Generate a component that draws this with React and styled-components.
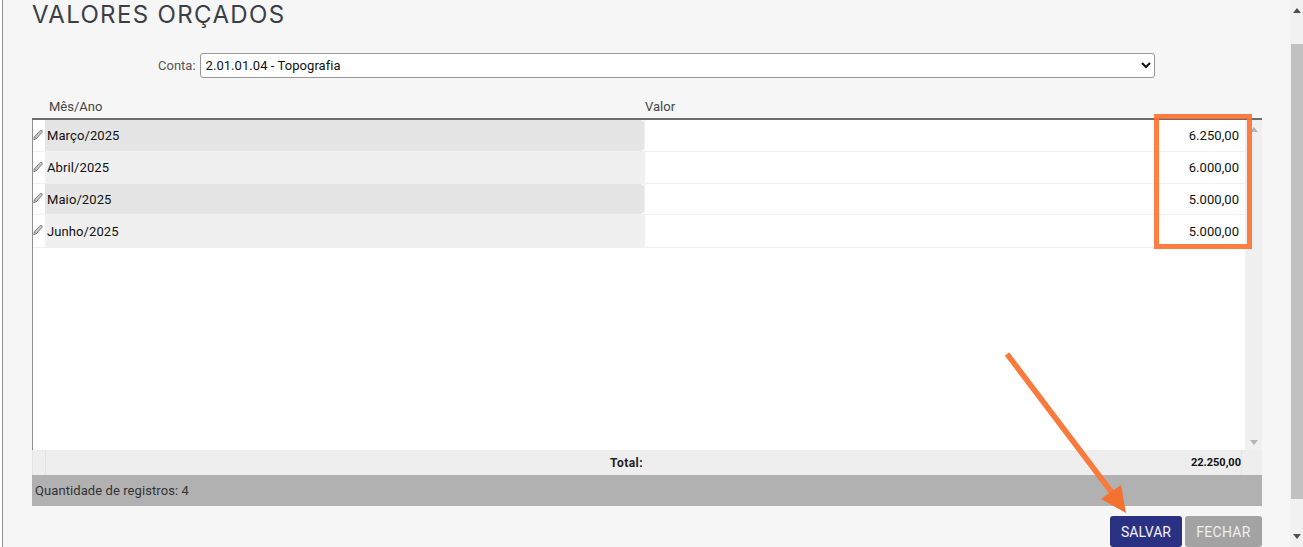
import React from "react";
import styled, { createGlobalStyle } from "styled-components";

const Global = createGlobalStyle`
  html, body { margin: 0; padding: 0; background: #fff; overflow: hidden; }
  body { font-family: Roboto, "Liberation Sans", sans-serif; }
  * { box-sizing: border-box; }
`;

const Page = styled.div`
  position: relative;
  width: 1303px;
  height: 547px;
  display: flex;
  overflow: hidden;
  padding-left: 2px;
  background: #fff;
`;
const Panel = styled.main`
  flex: 1;
  min-width: 0;
  background: #f6f6f6;
  border-left: 1px solid #8f8f8f;
  padding: 0 28px 0 29px;
  display: flex;
  flex-direction: column;
`;
const Title = styled.h1`
  margin: 0;
  height: 53px;
  font-family: Inter, "Open Sans", sans-serif;
  font-size: 24px;
  font-weight: 400;
  line-height: 29px;
  letter-spacing: 1.35px;
  color: #3a3f47;
`;
const Filter = styled.div`
  display: flex;
  align-items: center;
  height: 25px;
  padding-left: 126px;
  gap: 4px;
`;
const FilterLabel = styled.label`
  font-size: 13px;
  color: #555;
`;
const Select = styled.select`
  width: 955px;
  height: 25px;
  font-family: Roboto, sans-serif;
  font-size: 13px;
  letter-spacing: 0.06px;
  color: #111;
  background-color: #fff;
  border: 1px solid #999;
  border-radius: 3px;
  padding: 0 0 0 1px;
`;
const Head = styled.div`
  margin-top: 19px;
  height: 23px;
  display: grid;
  grid-template-columns: 17px 596px 1fr;
  align-items: center;
  border-bottom: 2px solid #6d6d6d;
  font-size: 13px;
  color: #444;
`;
const HeadCell = styled.div`
  grid-column: ${(p) => p.$col};
  padding-bottom: 3px;
`;
const Body = styled.div`
  height: 330px;
  display: flex;
  background: #fff;
  border-left: 1px solid #8f8f8f;
`;
const Rows = styled.div`
  flex: 1;
  min-width: 0;
`;
const Row = styled.div`
  display: grid;
  grid-template-columns: 12px 599px 1fr;
  height: ${(p) => p.$h}px;
  border-bottom: 1px solid #f0f0f0;
`;
const Gutter = styled.div`
  display: flex;
  align-items: center;
  justify-content: center;
  padding-bottom: 2px;
  padding-right: 2px;
`;
const NameCell = styled.div`
  display: flex;
  align-items: center;
  padding-left: 2px;
  font-size: 13px;
  letter-spacing: 0.1px;
  color: #111;
  background: ${(p) => (p.$odd ? "#e5e5e5" : "#f0f0f0")};
  border-radius: ${(p) => (p.$odd ? "0 4px 4px 0" : "0")};
`;
const ValueCell = styled.div`
  display: flex;
  align-items: center;
  justify-content: flex-end;
  padding-right: 6px;
  font-size: 13px;
  letter-spacing: 0.05px;
  color: #111;
  border-left: 1px solid #f0f0f0;
`;
const Track = styled.div`
  width: 17px;
  background: #f0f0f0;
  display: flex;
  flex-direction: column;
  justify-content: space-between;
  align-items: center;
  padding: 7px 0 5px;
`;
const Arrow = styled.span`
  width: 0;
  height: 0;
  border-left: 4px solid transparent;
  border-right: 4px solid transparent;
  ${(p) => (p.$down ? "border-top" : "border-bottom")}: 5px solid ${(p) => p.$color};
`;
const Totals = styled.div`
  height: 25px;
  display: grid;
  grid-template-columns: 13px 598px 597px 1fr;
  background: #eeeeee;
  border-left: 1px solid #e4e4e4;
  align-items: center;
`;
const TotalGutter = styled.div`
  height: 100%;
  border-right: 1px solid #e4e4e4;
`;
const TotalLabel = styled.div`
  text-align: right;
  font-size: 12px;
  font-weight: 700;
  letter-spacing: 0.45px;
  color: #222;
  padding-right: 1px;
`;
const TotalValue = styled.div`
  height: 100%;
  display: flex;
  align-items: center;
  justify-content: flex-end;
  font-size: 11px;
  font-weight: 700;
  color: #111;
`;
const TotalEnd = styled.div`
  height: 100%;
  border-left: 1px solid #e4e4e4;
`;
const Pager = styled.div`
  height: 31px;
  background: #b1b1b1;
  display: flex;
  align-items: center;
  padding-left: 3px;
  font-size: 13px;
  letter-spacing: 0.08px;
  color: #333;
`;
const Actions = styled.div`
  margin-top: 10px;
  display: flex;
  justify-content: flex-end;
  gap: 3px;
`;
const Button = styled.button`
  width: ${(p) => p.$w}px;
  height: 31px;
  border: 0;
  border-radius: 3px;
  font-family: Roboto, sans-serif;
  font-size: 14px;
  letter-spacing: ${(p) => p.$track}px;
  padding: 0;
  color: ${(p) => p.$fg};
  background: ${(p) => p.$bg};
`;
const Scrollbar = styled.div`
  width: 13px;
  background: #f1f1f1;
  display: flex;
  flex-direction: column;
  align-items: center;
  padding-top: 8px;
`;
const Thumb = styled.div`
  width: 12px;
  height: 455px;
  margin: 31px 0 35px 1px;
  background: #c1c1c1;
`;
const Highlight = styled.div`
  position: absolute;
  left: 1154px;
  top: 114px;
  width: 98px;
  height: 135px;
  border: 5px solid rgba(255, 112, 44, 0.9);
`;
const Annotation = styled.svg`
  position: absolute;
  left: 0;
  top: 0;
  pointer-events: none;
`;

const Pencil = () => (
  <svg width="11" height="12" viewBox="0 0 11 12" aria-hidden="true">
    <path d="M.8 11.2 L1.4 8 L7.8 1.2 Q8.7 .4 9.7 1.2 Q10.6 2.2 9.8 3.2 L3.6 10.2 Z" fill="#c4c4c4" stroke="#7c7c7c" strokeWidth="1" />
    <path d="M2 8.4 L4 10" stroke="#7c7c7c" strokeWidth=".8" fill="none" />
  </svg>
);

const data = [
  ["Março/2025", "6.250,00", 32],
  ["Abril/2025", "6.000,00", 32],
  ["Maio/2025", "5.000,00", 31],
  ["Junho/2025", "5.000,00", 33],
];

export default function App() {
  return (
    <Page>
      <Global />
      <Panel>
        <Title>VALORES ORÇADOS</Title>
        <Filter>
          <FilterLabel>Conta:</FilterLabel>
          <Select defaultValue="t">
            <option value="t">2.01.01.04 - Topografia</option>
          </Select>
        </Filter>
        <Head>
          <HeadCell $col={2}>Mês/Ano</HeadCell>
          <HeadCell $col={3}>Valor</HeadCell>
        </Head>
        <Body>
          <Rows>
            {data.map(([name, value, h], i) => (
              <Row key={name} $h={h}>
                <Gutter><Pencil /></Gutter>
                <NameCell $odd={i % 2 === 0}>{name}</NameCell>
                <ValueCell>{value}</ValueCell>
              </Row>
            ))}
          </Rows>
          <Track>
            <Arrow $color="#b5b5b5" />
            <Arrow $down $color="#b5b5b5" />
          </Track>
        </Body>
        <Totals>
          <TotalGutter />
          <TotalLabel>Total:</TotalLabel>
          <TotalValue>22.250,00</TotalValue>
          <TotalEnd />
        </Totals>
        <Pager>Quantidade de registros: 4</Pager>
        <Actions>
          <Button $w={72} $track={0} $bg="#2a3182" $fg="#f2f2f8">SALVAR</Button>
          <Button $w={77} $track={0.3} $bg="#a3a3a3" $fg="#efefef">FECHAR</Button>
        </Actions>
      </Panel>
      <Scrollbar>
        <Arrow $color="#505050" />
        <Thumb />
        <Arrow $down $color="#505050" />
      </Scrollbar>
      <Highlight />
      <Annotation width="1303" height="547" viewBox="0 0 1303 547">
        <line x1="1007" y1="354" x2="1113" y2="494" stroke="#f97a3c" strokeWidth="5.5" />
        <polygon points="1101,499 1121,485 1126,513" fill="#f3722f" />
      </Annotation>
    </Page>
  );
}
